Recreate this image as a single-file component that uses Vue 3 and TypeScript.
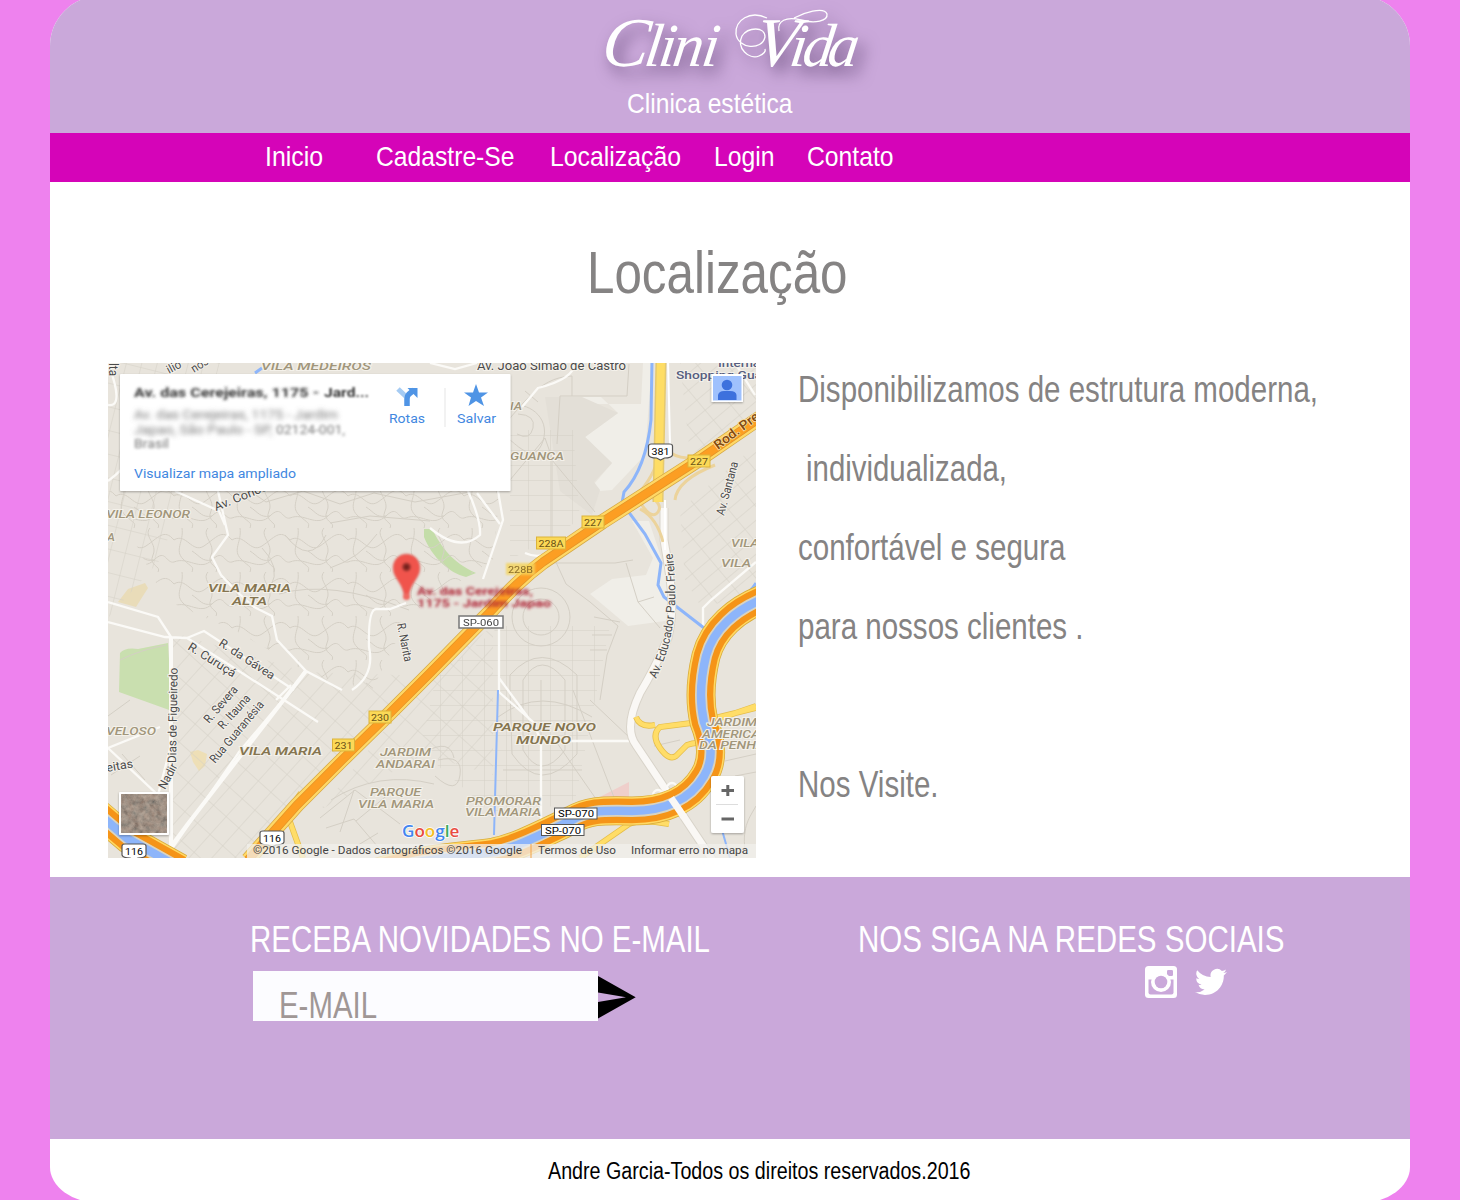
<script setup lang="ts">
import { h, type FunctionalComponent } from 'vue'

// Condensed text line: the glyphs are fitted to the given width.
const FitText: FunctionalComponent<{ text: string; w: number; size: number }> = (p) =>
  h('svg', { width: p.w, height: p.size, style: { display: 'block', overflow: 'visible', flex: 'none' } }, [
    h('text', {
      x: 0, y: p.size * 0.8, 'font-size': p.size, textLength: p.w,
      lengthAdjust: 'spacingAndGlyphs', fill: 'currentColor'
    }, p.text)
  ])
FitText.props = ['text', 'w', 'size']

const nav = [
  { label: 'Inicio', w: 58, gap: 53 },
  { label: 'Cadastre-Se', w: 138.5, gap: 36 },
  { label: 'Localização', w: 131, gap: 33 },
  { label: 'Login', w: 60.5, gap: 32.5 },
  { label: 'Contato', w: 86.5, gap: 0 }
]
const lines = [
  { text: 'Disponibilizamos de estrutura moderna,', w: 520, indent: 0 },
  { text: 'individualizada,', w: 201, indent: 7.7 },
  { text: 'confortável e segura', w: 267.5, indent: 0 },
  { text: 'para nossos clientes .', w: 285.5, indent: 0 },
  { text: '', w: 0, indent: 0 },
  { text: 'Nos Visite.', w: 140.5, indent: 0 }
]

interface Label { t: string; x: number; y: number; w: number; r?: number }
const areas: Label[] = [
  { t: 'VILA MEDEIROS', x: 261, y: 370, w: 110 },
  { t: 'VILA LEONOR', x: 106, y: 518, w: 84 },
  { t: 'IA', x: 510, y: 410, w: 12 },
  { t: 'GUANCA', x: 510, y: 460, w: 54 },
  { t: 'A', x: 107, y: 541, w: 8 },
  { t: 'VILA', x: 731, y: 547, w: 28 },
  { t: 'VILA', x: 721, y: 567, w: 30 },
  { t: 'VELOSO', x: 106, y: 735, w: 50 },
  { t: 'JARDIM', x: 380, y: 756, w: 51 },
  { t: 'ANDARAI', x: 376, y: 768, w: 59 },
  { t: 'PARQUE', x: 370, y: 796, w: 51 },
  { t: 'VILA MARIA', x: 358, y: 808, w: 76 },
  { t: 'PROMORAR', x: 466, y: 804.5, w: 75 },
  { t: 'VILA MARIA', x: 465, y: 816, w: 76 },
  { t: 'JARDIM', x: 707, y: 726, w: 50 },
  { t: 'AMERICA', x: 702, y: 737.5, w: 58 },
  { t: 'DA PENHA', x: 699, y: 749, w: 66 }
]
const strongAreas: Label[] = [
  { t: 'VILA MARIA', x: 208, y: 592, w: 83 },
  { t: 'ALTA', x: 232, y: 605, w: 35 },
  { t: 'VILA MARIA', x: 239, y: 755, w: 83 },
  { t: 'PARQUE NOVO', x: 493, y: 731, w: 103 },
  { t: 'MUNDO', x: 516, y: 744, w: 55 }
]
const streets: Label[] = [
  { t: 'Av. Joao Simao de Castro', x: 477, y: 370, w: 149 },
  { t: 'ilio', x: 169, y: 374, w: 15, r: -28 },
  { t: 'nos', x: 194, y: 373, w: 18, r: -32 },
  { t: 'lta', x: 109, y: 363, w: 13, r: 90 },
  { t: 'Av. Conce', x: 216, y: 511, w: 56, r: -22 },
  { t: 'R. da Gávea', x: 218, y: 645, w: 64, r: 33 },
  { t: 'R. Curuçá', x: 187, y: 649, w: 54, r: 32 },
  { t: 'R. Narita', x: 397, y: 624, w: 39, r: 79 },
  { t: 'R. Severa', x: 209, y: 724, w: 45, r: -49 },
  { t: 'R. Itauna', x: 223, y: 730, w: 42, r: -48 },
  { t: 'Rua Guaranésia', x: 215, y: 764, w: 77, r: -50 },
  { t: 'Nadir', x: 165, y: 790, w: 27, r: -62 },
  { t: 'Dias de Figueiredo', x: 176, y: 763, w: 95, r: -89 },
  { t: 'eitas', x: 107, y: 772, w: 27, r: -10 },
  { t: 'Av. Santana', x: 724, y: 516, w: 55, r: -75 }
]
const exits: Label[] = [
  { t: '227', x: 699, y: 461, w: 22 },
  { t: '227', x: 593, y: 522, w: 22 },
  { t: '228A', x: 551, y: 543, w: 29 },
  { t: '230', x: 380, y: 717, w: 22 },
  { t: '231', x: 343.5, y: 745, w: 22 }
]
const shields: Label[] = [
  { t: '381', x: 660.5, y: 452, w: 23 },
  { t: '116', x: 272, y: 839, w: 23 },
  { t: '116', x: 134, y: 852, w: 23 }
]
const river = 'M768 597 C735 609 713 630 706 656 C700 681 700 705 704 722 C712 742 714 760 704 776 C690 800 664 811 632 811 C600 810 587 811 572 820 C540 835 518 847 494 852 C460 857 420 858 375 873'
const highway = 'M764 415 L697 461 L602 522 L543 562 C520 579 505 596 489 613 L430 673 L390 713 L342 760 L297 805 L248 860'
const corner = 'M94 810 L128 839 L180 868'
</script>

<template>
  <div class="page">
    <div class="card">
      <header class="top">
        <svg class="logo" width="300" height="90" viewBox="580 0 300 90">
          <g class="logo-ink">
            <text transform="translate(0 66) skewX(-8)"><tspan x="600" font-size="70">C</tspan><tspan x="643 657 671 700">lini</tspan></text>
            <text transform="translate(0 66) skewX(-8)"><tspan x="753" font-size="70">V</tspan><tspan x="788 801 826">ida</tspan></text>
            <path d="M767 18C750 10 735 20 736 34C738 49 762 51 765 37C765 26 748 27 742 36C736 48 749 60 759 56C764 54 766 51 765 49" />
            <path d="M779 31C777 21 786 16 801 20C815 24 828 21 827 14C824 6 803 13 794 18" />
          </g>
        </svg>
        <FitText class="tagline" text="Clinica estética" :w="165.5" :size="28.5" />
      </header>

      <nav class="bar">
        <a v-for="n in nav" :key="n.label" :style="{ marginRight: n.gap + 'px' }">
          <FitText :text="n.label" :w="n.w" :size="28.5" />
        </a>
      </nav>

      <main>
        <h1><FitText text="Localização" :w="260.5" :size="60" /></h1>
        <div class="content">
          <svg class="map" width="648" height="495" viewBox="108 363 648 495">
            <defs>
              <pattern id="gridSw" width="24" height="17" patternUnits="userSpaceOnUse" patternTransform="rotate(-48)">
                <path d="M0 0H24M0 0V17" class="minor" />
              </pattern>
              <pattern id="gridNw" width="15" height="23" patternUnits="userSpaceOnUse" patternTransform="rotate(14)">
                <path d="M0 0H15M0 0V23" class="minor" />
              </pattern>
              <pattern id="gridS" width="22" height="15" patternUnits="userSpaceOnUse">
                <path d="M0 0H22M0 0V15" class="minor" />
              </pattern>
              <pattern id="gridE" width="23" height="13" patternUnits="userSpaceOnUse" patternTransform="rotate(-40)">
                <path d="M0 0H23M0 0V13" class="minor" />
              </pattern>
              <pattern id="hills" width="58" height="44" patternUnits="userSpaceOnUse">
                <path d="M0 12C12 4 18 26 30 18S48 0 58 12M8 0C10 14 0 22 9 31S20 38 18 44M0 34C14 28 26 44 38 32S50 36 58 34M34 0C27 8 42 16 37 27S46 38 42 44M18 23C26 28 28 34 38 32" class="minor" />
              </pattern>
              <filter id="soft" x="-20%" y="-50%" width="140%" height="200%"><feGaussianBlur stdDeviation="1.8" /></filter>
              <filter id="soft2" x="-20%" y="-50%" width="140%" height="200%"><feGaussianBlur stdDeviation="2.5" /></filter>
              <filter id="shade" x="-20%" y="-20%" width="140%" height="140%">
                <feDropShadow dx="0" dy="1" stdDeviation="1" flood-opacity=".3" />
              </filter>
              <filter id="terrain" x="0" y="0" width="100%" height="100%">
                <feTurbulence type="fractalNoise" baseFrequency=".18" numOctaves="4" seed="8" />
                <feColorMatrix values=".4 .25 0 0 .14  .3 .3 0 0 .12  .25 .3 0 0 .11  0 0 0 0 1" color-interpolation-filters="sRGB" />
              </filter>
              <radialGradient id="pin"><stop offset="0" stop-color="#5d1512" /><stop offset=".3" stop-color="#97312b" /><stop offset=".5" stop-color="#f0544c" /></radialGradient>
            </defs>

            <rect x="108" y="363" width="648" height="495" fill="#e8e4dc" />
            <path d="M577 397H601L618 413L585 437L612 463L594 484L600 491L612 490L645 455L652 363H643L641 404H597Z" fill="#f0eee8" />
            <path d="M582 397H545L560 491L592 515L600 490L594 482L612 463L585 437L618 413Z" fill="#e3dfd7" />
            <path d="M590 594L612 579L646 575L653 558L632 521H649L667 575L672 620L628 626Z" fill="#f0eee8" />
            <path d="M120 653Q125 647 138 649L168 643L172 711L119 692Z" fill="#c9dfaf" />
            <path d="M424 529H432C442 548 452 562 476 573L466 577C449 573 432 557 424 537Z" fill="#c4dda9" />
            <path d="M118 602L128 589L145 583L148 588L136 607Z" fill="#e9dcb9" />
            <path d="M190 752L198 750L207 754L205 766L199 771L193 762Z" fill="#eedfb6" />
            <path d="M590 802L629 782V800Z" fill="#efcfcb" />

            <path d="M108 363H220L193 470L160 560L108 618Z" fill="url(#gridNw)" />
            <path d="M108 491H500L493 560L410 614L372 690L312 675L238 632L165 600Z" fill="url(#hills)" />
            <path d="M171 632L306 672L430 676L248 858H170Z" fill="url(#gridSw)" />
            <path d="M436 678L500 626L610 626L575 800L500 820L420 750Z" fill="url(#gridS)" />
            <path d="M430 674L493 626V775L425 755L320 810Z" fill="url(#gridSw)" />
            <path d="M510 430H573L580 520L510 560Z" fill="url(#gridS)" />
            <path d="M680 363H756V420L690 455Z" fill="url(#gridE)" />
            <path d="M680 510L756 445V600L700 605L685 580Z" fill="url(#gridE)" />
            <g class="minor">
              <path d="M493 437C520 410 536 377 572 376L572 396H560L557 444M510 406C526 401 551 416 543 441S516 444 510 440M518 414Q536 415 533 428T517 434M525 391L538 402M510 480L545 438L552 458V550M552 460L595 512M572 396H627L629 364" />
              <path d="M555 560L566 584L590 602L618 626L607 655L600 700M552 563H615L633 560M626 563L638 602L660 628M638 602L654 597M594 617L620 622M592 635H612M590 650H607" />
              <circle cx="541" cy="617" r="29" /><circle cx="541" cy="617" r="18" />
              <path d="M510 690V675Q541 640 577 675V754Q541 796 512 754ZM523 690V680Q541 650 565 680V750Q541 782 523 750ZM498 717Q541 685 592 717M555 740L603 809M573 690L615 800M590 700L630 738M541 680V835M503 770H582" />
              <path d="M320 818L355 790L400 824M331 800Q378 770 434 784M326 828L354 819L378 847M354 790L340 832M356 821L390 793M438 760Q463 754 460 775T435 776M425 752Q450 738 454 758M350 850L378 833" />
              <path d="M108 716L130 700M120 660Q140 650 166 645M111 775L140 756M122 754L145 780M654 746L680 740M725 761L756 754M735 776L756 772M745 850C742 826 750 817 756 806" />
              <path d="M250 491L266 502L303 491L340 504L374 493L415 502L470 492M330 523L370 516L430 521M279 594Q330 579 409 610M262 548Q281 567 271 586M285 535Q310 567 326 535M330 568Q360 558 377 534" />
            </g>

            <g class="road">
              <path d="M108 602L158 617L171 637M108 622L165 637L187 638L242 673L318 722M171 637V745L158 795L108 748M108 748L160 727M171 637V858M305 671L292 689L239 752L171 850" />
              <path d="M218 491L228 535L212 557L221 575L235 590L254 607L272 616L277 640L306 671L342 690M352 690Q375 675 369 647Q368 610 376 609H390L406 603" />
              <path d="M187 638L204 631L294 690M291 685L276 700M108 363Q125 408 108 405M108 481Q123 470 138 451M175 491L219 511L225 525M430 528Q460 553 480 535Q481 520 468 491M498 491L503 520L483 579M525 553Q545 562 560 543M499 626V692L533 722L541 741H630M541 740V820M499 678L530 720" />
              <path d="M522 407L538 388Q574 379 575 363M477 493L500 524M430 363L455 369L477 363M735 363L755 395M756 562L711 600L703 608V630" />
            </g>
            <path d="M171 637V847M306 671L187 825L164 856" fill="none" stroke="#fbfaf7" stroke-width="4" />
            <path d="M498 690L494 835M722 830L730 858" class="stream" />
            <path d="M652 360L651 420Q646 468 624 492L622 503L645 534L661 563L658 585L664 597L704 628M756 583Q750 593 741 597M262 368L255 373" class="stream wide" />
            <path d="M664 508V540C670 576 676 604 668 638Q654 670 640 693C630 714 627 733 636 745L676 805L718 868" class="casing" />
            <path d="M664 508V540C670 576 676 604 668 638Q654 670 640 693C630 714 627 733 636 745L676 805L718 868" class="big" />
            <path d="M651 497Q663 505 658 512T644 508T651 497M640 509Q657 518 663 542M656 465Q648 487 625 506M671 453Q681 460 704 458M675 500Q677 480 715 465" fill="none" stroke="#ecd39b" stroke-width="3" />
            <circle cx="658" cy="795" r="5" class="road" /><circle cx="672" cy="788" r="5" class="road" />
            <path d="M661 360L658 502" fill="none" stroke="#e5c96f" stroke-width="11" />
            <path d="M661 360L658 502" fill="none" stroke="#fedd65" stroke-width="8" />
            <path d="M668 360L670 445M665 500L665 550" fill="none" stroke="#fff" stroke-width="2" />
            <path d="M756 708L699 722L660 727Q651 735 660 748T676 756L687 745Q700 740 708 747M636 717Q640 728 655 725M703 724L756 706M580 858L629 824Q640 819 669 824M289 819L303 858M285 815L301 793" fill="none" stroke="#e5bd49" stroke-width="6" />
            <path d="M756 708L699 722L660 727Q651 735 660 748T676 756L687 745Q700 740 708 747M636 717Q640 728 655 725M703 724L756 706M580 858L629 824Q640 819 669 824M289 819L303 858M285 815L301 793" fill="none" stroke="#ffdd68" stroke-width="4.5" />
            <g v-for="d in [river, corner]" :key="d" fill="none">
              <path :d="d" stroke="#d9ab3a" stroke-width="29" />
              <path :d="d" stroke="#ffd964" stroke-width="27.5" />
              <path :d="d" stroke="#f59418" stroke-width="24.5" />
              <path :d="d" stroke="#d9d4c1" stroke-width="12" />
              <path :d="d" stroke="#8db5fa" stroke-width="8.5" />
            </g>
            <path d="M671 798L684 817" class="big" />
            <path :d="highway" fill="none" stroke="#d5a947" stroke-width="15" />
            <path :d="highway" fill="none" stroke="#ffd866" stroke-width="13.5" />
            <path :d="highway" fill="none" stroke="#e39529" stroke-width="9" />
            <path :d="highway" fill="none" stroke="#fc9e23" stroke-width="7.5" />

            <text v-for="(l, i) in areas" :key="'a' + i" class="area" :x="l.x" :y="l.y" :textLength="l.w" lengthAdjust="spacingAndGlyphs">{{ l.t }}</text>
            <text v-for="(l, i) in strongAreas" :key="'s' + i" class="area strong" :x="l.x" :y="l.y" :textLength="l.w" lengthAdjust="spacingAndGlyphs">{{ l.t }}</text>
            <text v-for="(l, i) in streets" :key="'r' + i" class="street" :transform="`translate(${l.x} ${l.y}) rotate(${l.r ?? 0})`" :textLength="l.w" lengthAdjust="spacingAndGlyphs">{{ l.t }}</text>
            <path id="freire" d="M656 679C673 644 680 604 672 550" fill="none" />
            <text class="street"><textPath href="#freire" textLength="129" lengthAdjust="spacingAndGlyphs">Av. Educador Paulo Freire</textPath></text>
            <text class="shop" x="718" y="367" textLength="42" lengthAdjust="spacingAndGlyphs">Interna</text>
            <text class="shop" x="676" y="378.5" textLength="86" lengthAdjust="spacingAndGlyphs">Shopping Gua</text>
            <text class="rod" transform="translate(718 450) rotate(-37)" textLength="60" lengthAdjust="spacingAndGlyphs">Rod. Pres</text>

            <g v-for="(l, i) in exits" :key="'e' + i">
              <rect :x="l.x - l.w / 2" :y="l.y - 6" :width="l.w" height="12" fill="#fbd957" stroke="#dcb33b" />
              <text class="num" :x="l.x - l.w / 2 + 2" :y="l.y + 3.6" :textLength="l.w - 4" lengthAdjust="spacingAndGlyphs" fill="#6a5216">{{ l.t }}</text>
            </g>
            <rect x="506" y="563" width="29" height="12" fill="#f5d55c" class="slight" opacity=".8" />
            <text class="num faint" x="508" y="573" textLength="25" lengthAdjust="spacingAndGlyphs">228B</text>
            <g v-for="(l, i) in shields" :key="'h' + i">
              <path :d="`M${l.x - 12} ${l.y - 6}Q${l.x - 12} ${l.y - 8} ${l.x - 9} ${l.y - 8}H${l.x + 9}Q${l.x + 12} ${l.y - 8} ${l.x + 12} ${l.y - 6}V${l.y + 3}Q${l.x + 11} ${l.y + 6} ${l.x + 4} ${l.y + 6}L${l.x} ${l.y + 8}L${l.x - 4} ${l.y + 6}Q${l.x - 11} ${l.y + 6} ${l.x - 12} ${l.y + 3}Z`" fill="#fff" stroke="#555" stroke-width="1.2" />
              <text class="num" :x="l.x - 9" :y="l.y + 3.3" textLength="18" lengthAdjust="spacingAndGlyphs">{{ l.t }}</text>
            </g>
            <g v-for="(p, i) in [[554.5, 808], [541.5, 824.5]]" :key="'p' + i">
              <rect :x="p[0]" :y="p[1]" width="42.5" height="11" fill="#fff" stroke="#555" />
              <text class="num" :x="p[0] + 3.5" :y="p[1] + 9" textLength="36" lengthAdjust="spacingAndGlyphs">SP-070</text>
            </g>
            <g class="hint">
              <rect x="459" y="616" width="44" height="12" fill="#fff" stroke="#777" stroke-width="1.500" />
              <text class="num" x="463" y="625.5" textLength="36" lengthAdjust="spacingAndGlyphs" fill="#444">SP-060</text>
            </g>

            <g filter="url(#soft)" class="place">
              <text x="417" y="595" textLength="116" lengthAdjust="spacingAndGlyphs">Av. das Cerejeiras,</text>
              <text x="417" y="607" textLength="134" lengthAdjust="spacingAndGlyphs">1175 - Jardim Japao</text>
            </g>
            <g class="slight">
              <path d="M406.500 554C399 554 393 560 393 568C393 578 402 582 404 595H409C411 582 420 578 420 568C420 560 414 554 406.500 554Z" fill="#f0544c" stroke="#d7817b" stroke-width=".8" />
              <circle cx="406.500" cy="567" r="10.500" fill="url(#pin)" /><circle cx="406.500" cy="596.500" r="3.500" fill="#ef6961" />
            </g>

            <g filter="url(#shade)"><rect x="120" y="374" width="390.500" height="117" rx="1" fill="#fff" /></g>
            <text class="addr title" filter="url(#soft)" x="134" y="397" textLength="185" lengthAdjust="spacingAndGlyphs">Av. das Cerejeiras, 1175 -</text>
            <text class="addr title hazy" x="324" y="397" textLength="45" lengthAdjust="spacingAndGlyphs">Jard...</text>
            <g filter="url(#soft2)" class="addr">
              <text x="134" y="419" textLength="204" lengthAdjust="spacingAndGlyphs">Av. das Cerejeiras, 1175 - Jardim</text>
              <text x="134" y="434" textLength="138" lengthAdjust="spacingAndGlyphs">Japao, São Paulo - SP,</text>
            </g>
            <g filter="url(#soft)" class="addr">
              <text x="276" y="434" textLength="69" lengthAdjust="spacingAndGlyphs">02124-001,</text>
              <text x="134" y="448" textLength="35" lengthAdjust="spacingAndGlyphs">Brasil</text>
            </g>
            <text class="link" x="134" y="477.5" textLength="162" lengthAdjust="spacingAndGlyphs">Visualizar mapa ampliado</text>
            <text class="link" x="389" y="423" textLength="36" lengthAdjust="spacingAndGlyphs">Rotas</text>
            <text class="link" x="457" y="423" textLength="39" lengthAdjust="spacingAndGlyphs">Salvar</text>
            <path d="M398 389L406.500 397" fill="none" stroke="#a5cbf3" stroke-width="5" />
            <path d="M407 406V399Q407 396 409 394L414 390" fill="none" stroke="#4f94e5" stroke-width="5.500" />
            <path d="M407.500 388H417.500V398Z" fill="#4f94e5" />
            <path d="M476 384L479 392.500H488L481 397.500L484 406L476 401L468.500 406L471 397.500L464 392.500H473Z" fill="#4f94e5" />
            <path d="M445 388V427" stroke="#e5e5e5" />

            <g filter="url(#shade)"><rect x="711.500" y="374" width="31.500" height="28" fill="#fff" /></g>
            <rect x="713" y="376" width="28.500" height="24.500" fill="#9fc1fd" />
            <circle cx="727" cy="385" r="5.300" fill="#3d71dd" />
            <path d="M718 400V395Q719 391 724 391H730Q736 391 736.500 395V400Z" fill="#3d71dd" />

            <g filter="url(#shade)"><rect x="119" y="792" width="50" height="43" rx="1" fill="#fff" /></g>
            <rect x="121.500" y="794" width="45.500" height="39" filter="url(#terrain)" />
            <g filter="url(#shade)"><rect x="711" y="776" width="33" height="57" rx="2" fill="#fff" /></g>
            <path d="M716 804.500H738" stroke="#ddd" />
            <path d="M721.500 790.500H734M727.800 785V796M721.500 819H734" stroke="#666" stroke-width="3" />

            <rect x="247" y="844" width="509" height="14" fill="#f2f0ec" opacity=".75" />
            <path d="M531 844V858" stroke="#f4a344" />
            <text class="google" x="402" y="837" textLength="57.500" lengthAdjust="spacingAndGlyphs"><tspan fill="#4285ef">G</tspan><tspan fill="#e84c40">o</tspan><tspan fill="#f4bd23">o</tspan><tspan fill="#4285ef">g</tspan><tspan fill="#3caa5b">l</tspan><tspan fill="#e84c40">e</tspan></text>
            <g class="credits">
              <text x="253" y="854" textLength="269" lengthAdjust="spacingAndGlyphs">©2016 Google - Dados cartográficos ©2016 Google</text>
              <text x="538" y="854" textLength="78" lengthAdjust="spacingAndGlyphs">Termos de Uso</text>
              <text x="631" y="854" textLength="117" lengthAdjust="spacingAndGlyphs">Informar erro no mapa</text>
            </g>
          </svg>
          <div class="copy">
            <div v-for="(l, i) in lines" :key="i" class="line" :style="{ paddingLeft: l.indent + 'px' }">
              <FitText v-if="l.text" :text="l.text" :w="l.w" :size="36" />
            </div>
          </div>
        </div>
      </main>

      <section class="contact">
        <div class="news">
          <FitText text="RECEBA NOVIDADES NO E-MAIL" :w="460" :size="36" />
          <div class="form">
            <div class="field"><FitText text="E-MAIL" :w="98" :size="36" /></div>
            <svg width="38" height="43" viewBox="0 0 38 43"><path d="M0 0L37.700 21.200L0 42.500V26L28 21.200L0 16.500Z" /></svg>
          </div>
        </div>
        <div class="social">
          <FitText text="NOS SIGA NA REDES SOCIAIS" :w="426.5" :size="36" />
          <div class="icons">
            <svg width="32" height="32" viewBox="0 0 32 32">
              <rect width="32" height="32" rx="3.500" fill="#fff" />
              <rect x="22" y="4" width="6" height="6" rx="1.200" fill="#caa8da" />
              <path d="M3.500 13.500H28.500V26.500Q28.500 28.500 26.500 28.500H5.500Q3.500 28.500 3.500 26.500Z" fill="#caa8da" />
              <circle cx="16" cy="16" r="10" fill="#fff" />
              <circle cx="16" cy="16" r="6.300" fill="#caa8da" />
            </svg>
            <svg width="32" height="32" viewBox="0 0 32 32" fill="#fff">
              <path d="M32 6.100a13 13 0 0 1-3.800 1A6.600 6.600 0 0 0 31.100 3.500a13 13 0 0 1-4.200 1.600A6.560 6.560 0 0 0 15.700 11.100 18.600 18.600 0 0 1 2.200 4.200a6.560 6.560 0 0 0 2 8.800 6.500 6.500 0 0 1-3-.8v.1a6.570 6.570 0 0 0 5.300 6.400 6.600 6.600 0 0 1-3 .1 6.570 6.570 0 0 0 6.100 4.600A13.200 13.200 0 0 1 0 26.100a18.600 18.600 0 0 0 10.100 2.900c12.100 0 18.700-10 18.700-18.700l0-.8A13.300 13.300 0 0 0 32 6.100Z" />
            </svg>
          </div>
        </div>
      </section>

      <footer><FitText text="Andre Garcia-Todos os direitos reservados.2016" :w="422.5" :size="23" /></footer>
    </div>
  </div>
</template>

<style>
body { margin: 0; }
</style>

<style scoped>
.page { width: 1460px; height: 1200px; overflow: hidden; background: #ee82ee; display: flex; justify-content: center; align-items: flex-start; font-family: "Liberation Sans", Arial, sans-serif; }
.card { width: 1360px; height: 1207px; margin-top: -4px; border-radius: 50px 50px 50px 50px / 50px 50px 36px 36px; overflow: hidden; background: #fff; flex: none; display: flex; flex-direction: column; }
.top { height: 137px; background: #caa8da; color: #fff; display: flex; flex-direction: column; box-sizing: border-box; padding-top: 4px; flex: none; }
.logo { margin-left: 530px; flex: none; overflow: visible; }
.logo-ink { filter: drop-shadow(6px 8px 8px rgba(55, 30, 75, .65)); fill: #fff; }
.logo-ink text { font: italic 61px "Liberation Serif", serif; }
.logo-ink path { fill: none; stroke: #fff; stroke-width: 1.3; }
.tagline { margin: 0 0 0 576.800px; }
.bar { height: 49px; background: #d504b8; color: #fff; display: flex; box-sizing: border-box; padding: 10px 0 0 214.500px; flex: none; }
main { height: 695px; flex: none; color: #858383; }
h1 { margin: 0; padding: 62.500px 0 58.500px 537px; font-weight: 400; }
.content { display: flex; margin-left: 58px; }
.map { flex: none; font-family: Roboto, sans-serif; }
.copy { padding: 10.200px 0 0 42px; }
.line { height: 79px; }
.contact { height: 262px; flex: none; background: #caa8da; color: #fff; display: flex; box-sizing: border-box; padding: 46px 0 0 200px; }
.news { width: 608px; }
.form { display: flex; align-items: center; margin: 12px 0 0 3px; }
.field { width: 345px; height: 50px; box-sizing: border-box; padding: 18.200px 0 0 26px; background: #fcfcff; color: #a09796; overflow: hidden; }
.form > svg { margin-top: 2px; }
.icons { display: flex; gap: 18px; padding: 7px 0 0 287px; }
footer { padding: 21.500px 0 0 498px; color: #000; }

.minor { fill: none; stroke: #d4cfc5; stroke-width: 1; }
.road { fill: none; stroke: #fbfaf7; stroke-width: 2.3; }
.casing { fill: none; stroke: #d9d4ca; stroke-width: 9; }
.big { fill: none; stroke: #faf8f5; stroke-width: 7; }
.stream { fill: none; stroke: #8db5fa; stroke-width: 2; }
.wide { stroke-width: 3; }
.area { font-size: 11.800px; font-style: italic; font-weight: 500; fill: #a1967b; stroke: #f4f1ea; stroke-width: 2px; paint-order: stroke; }
.strong { fill: #857550; font-weight: 600; }
.street { font-size: 12px; fill: #4a4a4a; stroke: #f4f1ea; stroke-width: 2px; paint-order: stroke; }
.shop { font-size: 11.500px; font-weight: 500; fill: #565e80; stroke: #f4f1ea; stroke-width: 2px; paint-order: stroke; }
.rod { font-size: 13px; font-weight: 500; fill: #83490d; stroke: #fbe1a8; stroke-width: 1.500px; paint-order: stroke; }
.num { font-size: 9.800px; }
.faint { fill: #8a6c28; filter: blur(.5px); }
.slight { filter: blur(.8px); }
.hint { filter: blur(.4px); }
.hazy { filter: blur(1px); }
.place { font-size: 11.500px; font-weight: 700; fill: #ae2434; }
.addr { font-size: 12px; fill: #777; }
.title { font-size: 13px; font-weight: 700; fill: #333; }
.link { font-size: 12.500px; fill: #4287df; }
.google { font: 600 16.500px "Open Sans", sans-serif; stroke: #fff; stroke-width: 1.500px; paint-order: stroke; }
.credits { font-size: 10.500px; fill: #444; }
</style>
